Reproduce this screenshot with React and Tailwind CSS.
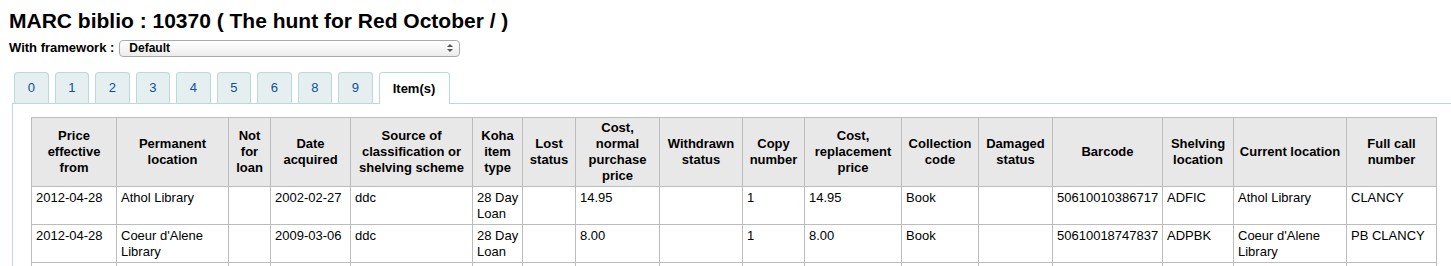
import React from "react";

const headers = [
  ["Price effective from", 85],
  ["Permanent location", 112],
  ["Not for loan", 42],
  ["Date acquired", 80],
  ["Source of classification or shelving scheme", 122],
  ["Koha item type", 50],
  ["Lost status", 53],
  ["Cost, normal purchase price", 84],
  ["Withdrawn status", 83],
  ["Copy number", 62],
  ["Cost, replacement price", 97],
  ["Collection code", 77],
  ["Damaged status", 74],
  ["Barcode", 110],
  ["Shelving location", 71],
  ["Current location", 113],
  ["Full call number", 90],
];

const rows = [
  ["2012-04-28", "Athol Library", "", "2002-02-27", "ddc", "28 Day Loan", "", "14.95", "", "1", "14.95", "Book", "", "50610010386717", "ADFIC", "Athol Library", "CLANCY"],
  ["2012-04-28", "Coeur d'Alene Library", "", "2009-03-06", "ddc", "28 Day Loan", "", "8.00", "", "1", "8.00", "Book", "", "50610018747837", "ADPBK", "Coeur d'Alene Library", "PB CLANCY"],
  ["", "", "", "", "", "", "", "", "", "", "", "", "", "", "", "", ""],
];

const tabs = ["0", "1", "2", "3", "4", "5", "6", "8", "9"];

const App = () => {
  return (
    <div className="bg-white h-[266px] overflow-hidden text-black" style={{ fontFamily: "'Liberation Sans', Arial, sans-serif" }}>
      <h1 className="pl-[9px] pt-[8px] text-[21px] leading-[26px] font-bold">
        MARC biblio : 10370 ( The hunt for Red October / )
      </h1>
      <div className="flex items-center pl-[9px] mt-[5px] h-[18px]">
        <span className="text-[13px] font-bold mr-[5px]">With framework :</span>
        <div className="flex items-center justify-between w-[341px] h-[17px] rounded-[4px] border border-[#a9a9a9] bg-gradient-to-b from-white to-[#ececec] pl-[9px] pr-[6px]">
          <span className="text-[12px] font-bold leading-none">Default</span>
          <svg width="6" height="10" viewBox="0 0 6 10">
            <path d="M0 4 L3 1 L6 4 Z" fill="#555" />
            <path d="M0 6 L3 9 L6 6 Z" fill="#555" />
          </svg>
        </div>
      </div>
      <div className="flex items-end pl-[14px] mt-[15px] gap-[6px] relative z-10">
        {tabs.map((t) => (
          <div key={t} className="w-[34.5px] h-[31px] flex items-center justify-center rounded-t-[4px] border border-b-0 border-[#b9d9da] bg-[#e6eff0] text-[13px] text-[#0b4ea2]">
            {t}
          </div>
        ))}
        <div className="w-[71px] h-[32px] -mb-px flex items-center justify-center rounded-t-[4px] border border-b-0 border-[#b9d9da] bg-white text-[13px] font-bold">
          Item(s)
        </div>
      </div>
      <div className="ml-[12px] border-l border-t border-[#b9d9da] pl-[18px] pt-[13px]">
        <table className="table-fixed border-collapse w-[1406px] text-[13px] leading-[16px]">
          <colgroup>
            {headers.map(([h, w]) => (
              <col key={h} style={{ width: w }} />
            ))}
          </colgroup>
          <thead>
            <tr>
              {headers.map(([h]) => (
                <th key={h} className="border border-[#bcbcbc] bg-[#e8e8e8] font-bold text-center align-middle px-[2px] pt-[2px] pb-[2px] h-[69px]">
                  {h}
                </th>
              ))}
            </tr>
          </thead>
          <tbody>
            {rows.map((r, i) => (
              <tr key={i}>
                {r.map((c, j) => (
                  <td key={j} className="border border-[#bcbcbc] align-top pl-[4px] pr-[2px] pt-[3px] pb-[2px] h-[38px]">
                    {c}
                  </td>
                ))}
              </tr>
            ))}
          </tbody>
        </table>
      </div>
    </div>
  );
};

export default App;
